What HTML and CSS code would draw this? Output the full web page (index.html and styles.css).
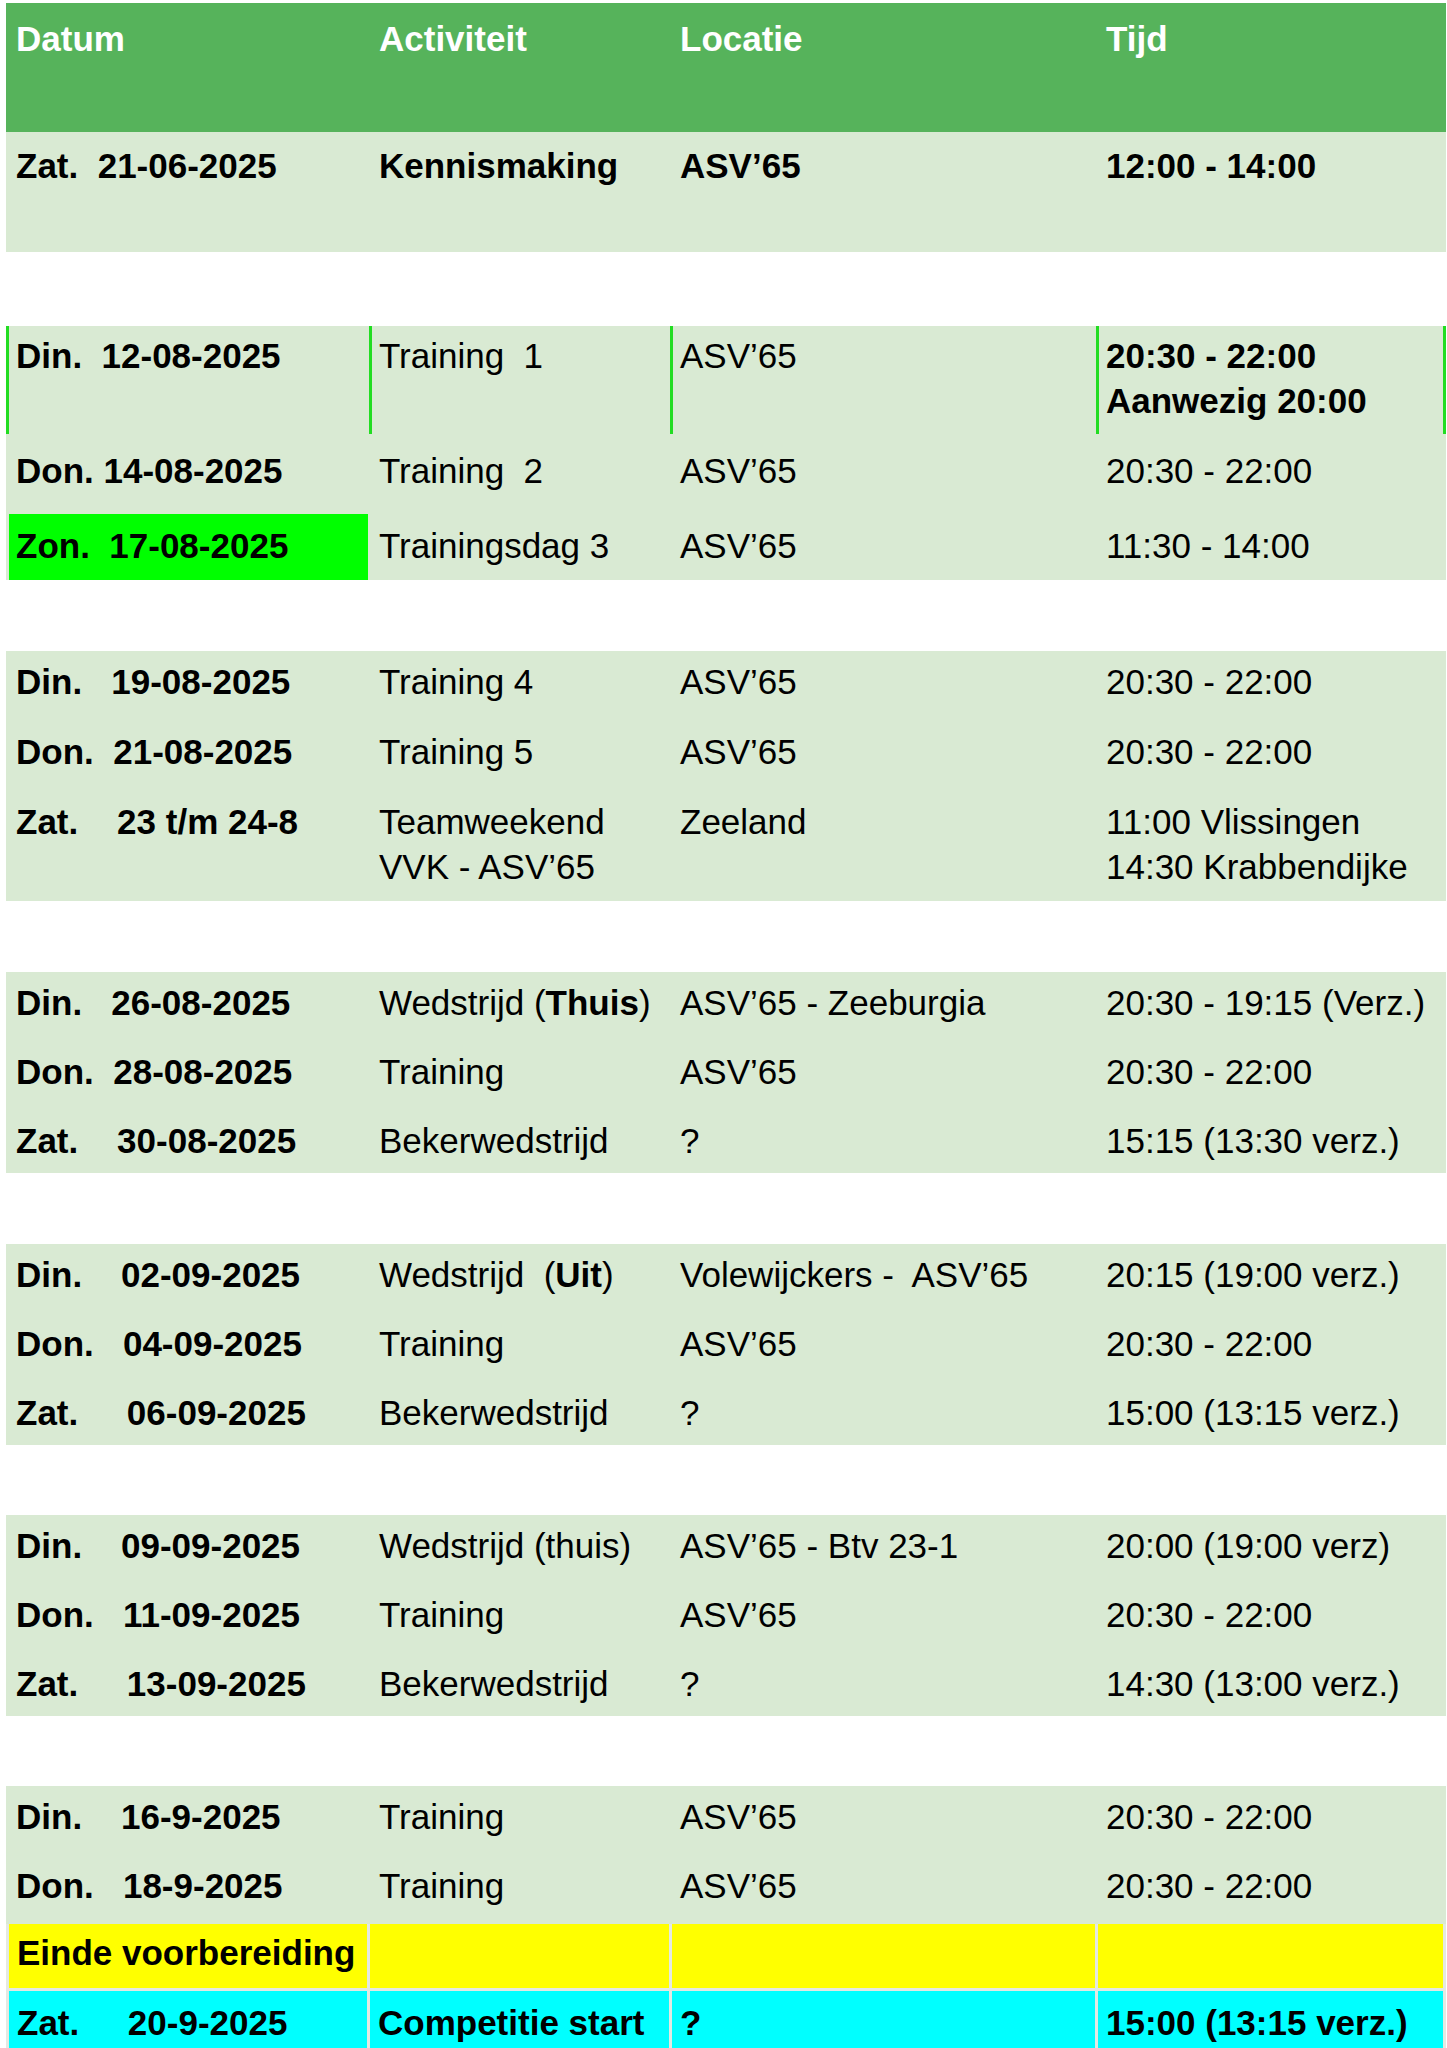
FILE: index.html
```html
<!DOCTYPE html>
<html lang="nl">
<head>
<meta charset="utf-8">
<title>Schema voorbereiding</title>
<link rel="stylesheet" href="styles.css">
</head>
<body>
<div class="sheet">
  <div class="row head">
    <div class="cell">Datum</div>
    <div class="cell">Activiteit</div>
    <div class="cell">Locatie</div>
    <div class="cell">Tijd</div>
  </div>

  <div class="group">
    <div class="row intro b">
      <div class="cell">Zat.  21-06-2025</div>
      <div class="cell">Kennismaking</div>
      <div class="cell">ASV’65</div>
      <div class="cell">12:00 - 14:00</div>
    </div>
  </div>

  <div class="group g2">
    <div class="row r-first lined">
      <div class="cell b">Din.  12-08-2025</div>
      <div class="cell">Training  1</div>
      <div class="cell">ASV’65</div>
      <div class="cell b">20:30 - 22:00<br>Aanwezig 20:00</div>
    </div>
    <div class="row r-second">
      <div class="cell b">Don. 14-08-2025</div>
      <div class="cell">Training  2</div>
      <div class="cell">ASV’65</div>
      <div class="cell">20:30 - 22:00</div>
    </div>
    <div class="row r-third">
      <div class="cell b hl-green">Zon.  17-08-2025</div>
      <div class="cell">Trainingsdag 3</div>
      <div class="cell">ASV’65</div>
      <div class="cell">11:30 - 14:00</div>
    </div>
  </div>

  <div class="group g3">
    <div class="row">
      <div class="cell b">Din.   19-08-2025</div>
      <div class="cell">Training 4</div>
      <div class="cell">ASV’65</div>
      <div class="cell">20:30 - 22:00</div>
    </div>
    <div class="row">
      <div class="cell b">Don.  21-08-2025</div>
      <div class="cell">Training 5</div>
      <div class="cell">ASV’65</div>
      <div class="cell">20:30 - 22:00</div>
    </div>
    <div class="row">
      <div class="cell b">Zat.    23 t/m 24-8</div>
      <div class="cell">Teamweekend<br>VVK - ASV’65</div>
      <div class="cell">Zeeland</div>
      <div class="cell">11:00 Vlissingen<br>14:30 Krabbendijke</div>
    </div>
  </div>

  <div class="group g4">
    <div class="row">
      <div class="cell b">Din.   26-08-2025</div>
      <div class="cell">Wedstrijd (<b>Thuis</b>)</div>
      <div class="cell">ASV’65 - Zeeburgia</div>
      <div class="cell">20:30 - 19:15 (Verz.)</div>
    </div>
    <div class="row">
      <div class="cell b">Don.  28-08-2025</div>
      <div class="cell">Training</div>
      <div class="cell">ASV’65</div>
      <div class="cell">20:30 - 22:00</div>
    </div>
    <div class="row">
      <div class="cell b">Zat.    30-08-2025</div>
      <div class="cell">Bekerwedstrijd</div>
      <div class="cell">?</div>
      <div class="cell">15:15 (13:30 verz.)</div>
    </div>
  </div>

  <div class="group g5">
    <div class="row">
      <div class="cell b">Din.    02-09-2025</div>
      <div class="cell">Wedstrijd  (<b>Uit</b>)</div>
      <div class="cell">Volewijckers -  ASV’65</div>
      <div class="cell">20:15 (19:00 verz.)</div>
    </div>
    <div class="row">
      <div class="cell b">Don.   04-09-2025</div>
      <div class="cell">Training</div>
      <div class="cell">ASV’65</div>
      <div class="cell">20:30 - 22:00</div>
    </div>
    <div class="row">
      <div class="cell b">Zat.     06-09-2025</div>
      <div class="cell">Bekerwedstrijd</div>
      <div class="cell">?</div>
      <div class="cell">15:00 (13:15 verz.)</div>
    </div>
  </div>

  <div class="group">
    <div class="row">
      <div class="cell b">Din.    09-09-2025</div>
      <div class="cell">Wedstrijd (thuis)</div>
      <div class="cell">ASV’65 - Btv 23-1</div>
      <div class="cell">20:00 (19:00 verz)</div>
    </div>
    <div class="row">
      <div class="cell b">Don.   11-09-2025</div>
      <div class="cell">Training</div>
      <div class="cell">ASV’65</div>
      <div class="cell">20:30 - 22:00</div>
    </div>
    <div class="row">
      <div class="cell b">Zat.     13-09-2025</div>
      <div class="cell">Bekerwedstrijd</div>
      <div class="cell">?</div>
      <div class="cell">14:30 (13:00 verz.)</div>
    </div>
  </div>

  <div class="group">
    <div class="row">
      <div class="cell b">Din.    16-9-2025</div>
      <div class="cell">Training</div>
      <div class="cell">ASV’65</div>
      <div class="cell">20:30 - 22:00</div>
    </div>
    <div class="row">
      <div class="cell b">Don.   18-9-2025</div>
      <div class="cell">Training</div>
      <div class="cell">ASV’65</div>
      <div class="cell">20:30 - 22:00</div>
    </div>
    <div class="tail">
      <div class="trow yellow b">
        <div class="tcell">Einde voorbereiding</div>
        <div class="tcell"></div>
        <div class="tcell"></div>
        <div class="tcell"></div>
      </div>
      <div class="trow cyan b">
        <div class="tcell">Zat.     20-9-2025</div>
        <div class="tcell">Competitie start</div>
        <div class="tcell">?</div>
        <div class="tcell">15:00 (13:15 verz.)</div>
      </div>
    </div>
  </div>
</div>
</body>
</html>
```
FILE: styles.css
```css
* { box-sizing: border-box; }

html, body {
  margin: 0;
  padding: 0;
  background: #ffffff;
}

body {
  font-family: "Liberation Sans", Arial, sans-serif;
  font-size: 35px;
  line-height: 45px;
  color: #000000;
  overflow: hidden;
}

.sheet {
  width: 1440px;
  margin: 3px 0 0 6px;
}

.row {
  display: grid;
  grid-template-columns: 363px 301px 426px 350px;
}

.cell {
  padding: 8px 10px 16px 10px;
  white-space: pre;
}

.b { font-weight: bold; }

/* header */
.head {
  background: #56b35b;
  color: #ffffff;
  font-weight: bold;
}
.head .cell {
  padding-top: 13px;
  padding-bottom: 71px;
}

/* groups of rows */
.group {
  background: #d9ead3;
  margin-top: 70px;
}
.head + .group { margin-top: 0; }
.group.g2 { margin-top: 74px; }
.group.g3,
.group.g4,
.group.g5 { margin-top: 71px; }

.group > .row:last-child .cell { padding-bottom: 10px; }

.g3 > .row .cell { padding-bottom: 17px; }
.g3 > .row:last-child .cell { padding-bottom: 12px; }

.intro .cell {
  padding-top: 11px;
  padding-bottom: 64px !important;
}

/* second block */
.g2 .r-first .cell { padding-top: 7px; padding-bottom: 11px; }
.g2 .r-second .cell { padding-top: 14px; padding-bottom: 21px; }
.g2 .r-third .cell { padding-top: 9px; padding-bottom: 12px !important; }

.lined .cell { box-shadow: inset 3px 0 0 #22dd22; }
.lined .cell:last-child { box-shadow: inset 3px 0 0 #22dd22, inset -3px 0 0 #22dd22; }

.hl-green {
  background: #00ff00;
  margin-left: 3px;
  margin-right: 1px;
  padding-left: 7px;
}

/* yellow / cyan rows */
.tail {
  background: #e4e9e2;
  padding: 0 3px 0 3px;
  display: flex;
  flex-direction: column;
  gap: 3px;
}

.trow {
  display: grid;
  grid-template-columns: 358px 299px 423px 345px;
  column-gap: 3px;
}

.tcell {
  padding: 6px 8px 13px 8px;
  white-space: pre;
}

.cyan .tcell { padding-top: 9px; }

.yellow .tcell { background: #ffff00; }
.cyan .tcell { background: #00ffff; }
```
